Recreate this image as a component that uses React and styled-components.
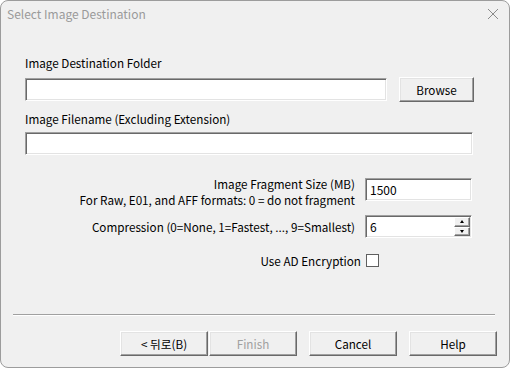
import React from "react";
import styled, { createGlobalStyle } from "styled-components";

const Global = createGlobalStyle`
  html, body { margin: 0; padding: 0; background: #ffffff; }
  body { font-family: "Noto Sans CJK KR", "Noto Sans", sans-serif; }
  * { box-sizing: border-box; }
`;

const FONT = `"Noto Sans CJK KR", "Noto Sans", sans-serif`;

const Window = styled.div`
  width: 510px;
  height: 368px;
  background: #f0f0f0;
  border: 1px solid #9c9c9c;
  border-radius: 8px;
  display: flex;
  flex-direction: column;
  overflow: hidden;
  font-family: ${FONT};
  font-size: 11.7px;
  color: #000;
`;

const TitleBar = styled.div`
  height: 29px;
  display: flex;
  align-items: center;
  justify-content: space-between;
  padding: 0 10px 4px 6px;
`;

const Title = styled.span`
  color: #9a9a9a;
  font-size: 12px;
  line-height: 16px;
`;

const Body = styled.div`
  display: flex;
  flex-direction: column;
  padding: 0 37px 0 24px;
`;

const Label = styled.div`
  line-height: 16px;
  height: 16px;
  margin-top: ${(p) => p.$mt || 0}px;
  white-space: nowrap;
`;

const Row = styled.div`
  display: flex;
  align-items: ${(p) => p.$align || "center"};
  justify-content: ${(p) => p.$justify || "flex-start"};
  gap: ${(p) => p.$gap || 0}px;
  margin-top: ${(p) => p.$mt || 0}px;
  padding-right: ${(p) => p.$pr || 0}px;
`;

const Sunken = styled.div`
  position: relative;
  width: ${(p) => p.$w}px;
  height: 23px;
  background: #fff;
  border: 1px solid;
  border-color: #a0a0a0 #ffffff #ffffff #a0a0a0;
  box-shadow: inset 1px 1px #696969, inset -1px -1px #e3e3e3;
  padding: 0 4px;
  line-height: 21px;
  font-size: 12px;
  margin-top: ${(p) => p.$mt || 0}px;
  flex-shrink: 0;
`;

const Button = styled.div`
  width: ${(p) => p.$w || 88}px;
  height: 25px;
  display: flex;
  align-items: center;
  justify-content: center;
  background: #f0f0f0;
  border: 1px solid;
  border-color: #ffffff #696969 #696969 #ffffff;
  box-shadow: inset -1px -1px #a0a0a0, inset 1px 1px #e3e3e3;
  color: ${(p) => (p.$disabled ? "#a0a0a0" : "#000")};
  margin-left: ${(p) => p.$ml || 0}px;
  flex-shrink: 0;
  white-space: nowrap;
`;

const RightLabels = styled.div`
  display: flex;
  flex-direction: column;
  align-items: flex-end;
  text-align: right;
  line-height: 16px;
  white-space: nowrap;
`;

const SpinBox = styled.div`
  position: absolute;
  right: 1px;
  top: 1px;
  bottom: 1px;
  width: 16px;
  display: flex;
  flex-direction: column;
`;

const SpinBtn = styled.div`
  flex: 1;
  display: flex;
  align-items: center;
  justify-content: center;
  background: #f0f0f0;
  border: 1px solid;
  border-color: #ffffff #696969 #696969 #ffffff;
  box-shadow: inset -1px -1px #a0a0a0;
`;

const Arrow = styled.span`
  width: 0;
  height: 0;
  border-left: 2.5px solid transparent;
  border-right: 2.5px solid transparent;
  ${(p) =>
    p.$up
      ? "border-bottom: 3px solid #000;"
      : "border-top: 3px solid #000;"}
`;

const Check = styled.div`
  width: 13px;
  height: 13px;
  background: #fff;
  border: 1px solid #5f5f5f;
`;

const Separator = styled.div`
  margin: 0 14px 0 12px;
  margin-top: ${(p) => p.$mt}px;
  height: 2px;
  border-top: 1px solid #a0a0a0;
  border-bottom: 1px solid #ffffff;
`;

const Footer = styled.div`
  display: flex;
  justify-content: flex-end;
  padding-right: 12px;
  margin-top: 15px;
`;

const CloseIcon = () => (
  <svg width="12" height="12" viewBox="0 0 12 12">
    <path d="M1 1 L11 11 M11 1 L1 11" stroke="#8a8a8a" strokeWidth="1" fill="none" />
  </svg>
);

export default function App() {
  return (
    <>
      <Global />
      <Window>
        <TitleBar>
          <Title>Select Image Destination</Title>
          <CloseIcon />
        </TitleBar>
        <Body>
          <Label $mt={25}>Image Destination Folder</Label>
          <Row $mt={6}>
            <Sunken $w={362} />
            <Button $w={75} $ml={12}>Browse</Button>
          </Row>
          <Label $mt={9}>Image Filename (Excluding Extension)</Label>
          <Row $mt={5}>
            <Sunken $w={448} />
          </Row>
          <Row $mt={21} $align="flex-start" $justify="flex-end" $gap={10}>
            <RightLabels>
              <span>Image Fragment Size (MB)</span>
              <span>For Raw, E01, and AFF formats: 0 = do not fragment</span>
            </RightLabels>
            <Sunken $w={107} $mt={2}>1500</Sunken>
          </Row>
          <Row $mt={7} $justify="flex-end" $gap={10}>
            <RightLabels>
              <span>Compression (0=None, 1=Fastest, ..., 9=Smallest)</span>
            </RightLabels>
            <Sunken $w={107}>
              6
              <SpinBox>
                <SpinBtn><Arrow $up /></SpinBtn>
                <SpinBtn><Arrow /></SpinBtn>
              </SpinBox>
            </Sunken>
          </Row>
          <Row $mt={14} $justify="flex-end" $gap={5} $pr={93}>
            <span>Use AD Encryption</span>
            <Check />
          </Row>
        </Body>
        <Separator $mt={45} />
        <Footer>
          <Button>&lt; 뒤로(B)</Button>
          <Button $disabled $ml={1}>Finish</Button>
          <Button $ml={12}>Cancel</Button>
          <Button $ml={12}>Help</Button>
        </Footer>
      </Window>
    </>
  );
}
